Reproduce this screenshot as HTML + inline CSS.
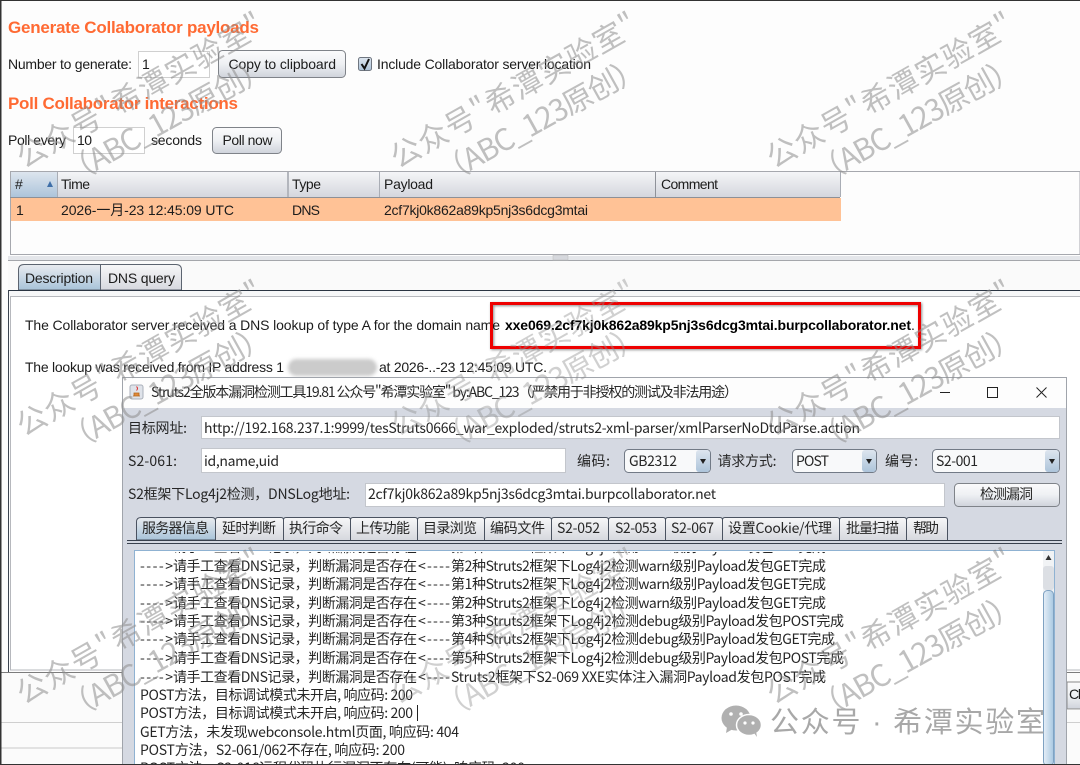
<!DOCTYPE html>
<html lang="zh">
<head>
<meta charset="utf-8">
<title>Burp Collaborator client</title>
<style>
html,body{margin:0;padding:0;background:#fdfdfd;width:1080px;height:765px;overflow:hidden}
svg{display:block;filter:blur(.3px)}
text{font-family:"Liberation Sans","Noto Sans CJK SC",sans-serif;font-size:14px;fill:#1c1c1c;white-space:pre}
.h{font-size:17px;font-weight:bold;fill:#ff6a33}
.w{font-family:"Noto Sans CJK SC","Liberation Sans",sans-serif;font-size:30px;fill:#8f8f8f;fill-opacity:.56}
.m{font-family:"Noto Sans CJK SC","Liberation Sans",sans-serif;font-size:14px;fill:#262626}
</style>
</head>
<body>
<svg xmlns="http://www.w3.org/2000/svg" width="1080" height="765" viewBox="0 0 1080 765">
<defs>
<linearGradient id="btn" x1="0" y1="0" x2="0" y2="1"><stop offset="0" stop-color="#fbfbfc"/><stop offset=".5" stop-color="#eef0f3"/><stop offset="1" stop-color="#cfd3db"/></linearGradient>
<linearGradient id="hd" x1="0" y1="0" x2="0" y2="1"><stop offset="0" stop-color="#f4f5f7"/><stop offset="1" stop-color="#d4d6dd"/></linearGradient>
<linearGradient id="hds" x1="0" y1="0" x2="0" y2="1"><stop offset="0" stop-color="#dde5ee"/><stop offset="1" stop-color="#adc4da"/></linearGradient>
<linearGradient id="tab" x1="0" y1="0" x2="0" y2="1"><stop offset="0" stop-color="#f7f7f8"/><stop offset="1" stop-color="#d6d8de"/></linearGradient>
<linearGradient id="tabs" x1="0" y1="0" x2="0" y2="1"><stop offset="0" stop-color="#e9ebef"/><stop offset="1" stop-color="#a8c3d9"/></linearGradient>
<linearGradient id="sb" x1="0" y1="0" x2="1" y2="0"><stop offset="0" stop-color="#e6eff7"/><stop offset="1" stop-color="#a9c8e2"/></linearGradient>
<filter id="bl" x="-20%" y="-40%" width="140%" height="180%"><feGaussianBlur stdDeviation="1.8"/></filter>
<filter id="sh" x="-5%" y="-20%" width="110%" height="140%"><feDropShadow dx="1" dy="1" stdDeviation="1.2" flood-color="#000" flood-opacity=".45"/></filter>
<clipPath id="logclip"><rect x="136" y="552" width="907" height="213"/></clipPath>
</defs>

<rect width="1080" height="765" fill="#fdfdfd"/>

<!-- Generate -->
<text class="h" x="8" y="33" textLength="251">Generate Collaborator payloads</text>
<text x="8" y="69" textLength="124">Number to generate:</text>
<rect x="138.500" y="51.500" width="71" height="26" fill="#fff" stroke="#d0d0d0"/>
<text x="142" y="69">1</text>
<rect x="218.500" y="50.500" width="127" height="27" rx="4" fill="url(#btn)" stroke="#7f8389"/>
<text x="228.500" y="69" textLength="107.500">Copy to clipboard</text>
<rect x="358.500" y="57.500" width="13" height="13" rx="2" fill="url(#hds)" stroke="#6f7680"/>
<path d="M361.500 64 L364.500 68.500 L369 59" fill="none" stroke="#111" stroke-width="2"/>
<text x="377" y="69" textLength="214">Include Collaborator server location</text>

<!-- Poll -->
<text class="h" x="8" y="109" textLength="230">Poll Collaborator interactions</text>
<text x="8" y="145" textLength="58">Poll every</text>
<rect x="73.500" y="127.500" width="71" height="26" fill="#fff" stroke="#d0d0d0"/>
<text x="77" y="145" textLength="15">10</text>
<text x="151" y="145" textLength="51">seconds</text>
<rect x="212.500" y="127.500" width="69" height="26" rx="4" fill="url(#btn)" stroke="#7f8389"/>
<text x="222.500" y="145" textLength="50">Poll now</text>

<!-- Table -->
<rect x="10.500" y="171.500" width="1069.500" height="83" fill="#fdfdfd" stroke="#a6a8ae"/>
<rect x="11" y="172" width="47" height="25" fill="url(#hds)"/>
<rect x="58" y="172" width="782" height="25" fill="url(#hd)"/>
<rect x="10" y="197" width="830" height="1" fill="#8d9097"/>
<rect x="57" y="172" width="1" height="25" fill="#a9adb5"/>
<rect x="287" y="172" width="2" height="25" fill="#b3b6bd"/>
<rect x="379" y="172" width="1" height="25" fill="#a9adb5"/>
<rect x="655" y="172" width="1" height="25" fill="#8f9299"/>
<rect x="840" y="172" width="1" height="25" fill="#a9adb5"/>
<path d="M47 187 L50 181 L53 187 Z" fill="#3f6fa8"/>
<text x="15" y="189">#</text>
<text x="61" y="189" textLength="29">Time</text>
<text x="292" y="189" textLength="29">Type</text>
<text x="384" y="189" textLength="49">Payload</text>
<text x="661" y="189" textLength="57">Comment</text>
<rect x="11" y="198" width="830" height="23" fill="#ffc296"/>
<text x="16" y="215">1</text>
<text x="61" y="215" textLength="173">2026-一月-23 12:45:09 UTC</text>
<text x="292" y="215" textLength="28">DNS</text>
<text x="384" y="215" textLength="204">2cf7kj0k862a89kp5nj3s6dcg3mtai</text>
<rect x="8" y="256" width="1072" height="4" fill="#e4e6ea"/>
<rect x="8" y="260" width="1072" height="1" fill="#a4a6ab"/>
<rect x="553" y="255" width="15" height="5" fill="#d6d8dd" stroke="#bbb" stroke-width=".5"/>
<rect x="8" y="261" width="1072" height="29" fill="#fafafa"/>

<!-- Detail tabs -->
<path d="M18.500 290 V270 Q18.500 264.500 24 264.500 H100.500 V290 Z" fill="url(#tabs)" stroke="#5c6470"/>
<path d="M100.500 290 V264.500 H176 Q181.500 264.500 181.500 270 V290 Z" fill="url(#tab)" stroke="#5c6470"/>
<text x="25" y="283" textLength="68">Description</text>
<text x="108" y="283" textLength="67">DNS query</text>
<rect x="8" y="291" width="1072" height="5" fill="#f6f7f8"/>
<rect x="8" y="290" width="1072" height="1" fill="#2a3442"/>
<rect x="8" y="290" width="1" height="383" fill="#3c4450"/>
<rect x="8" y="672" width="1072" height="1" fill="#3c4450"/>
<rect x="10.500" y="296.500" width="1070" height="373.500" fill="#fff" stroke="#b6b8bd"/>

<!-- Description text -->
<text x="25" y="330" textLength="475">The Collaborator server received a DNS lookup of type A for the domain name</text>
<text x="505" y="330" textLength="406" style="font-weight:bold;fill:#000">xxe069.2cf7kj0k862a89kp5nj3s6dcg3mtai.burpcollaborator.net</text>
<text x="911" y="330">.</text>
<text x="25" y="372" textLength="259">The lookup was received from IP address 1</text>
<text x="379" y="372" textLength="168">at 2026-..-23 12:45:09 UTC.</text>
<rect x="288" y="359" width="89" height="17" rx="8.500" fill="#cbcbcb" filter="url(#bl)"/>
<rect x="491.500" y="303.500" width="428" height="44" fill="none" stroke="#ee0000" stroke-width="3" filter="url(#sh)"/>

<!-- Lower right / left chrome -->
<rect x="0" y="673" width="1080" height="92" fill="#fbfbfb"/>
<rect x="0" y="672" width="1080" height="1" fill="#7c7c7c"/>
<rect x="0" y="722" width="1080" height="1" fill="#cfcfcf"/>
<rect x="0" y="747" width="122" height="2" fill="#e2e2e2"/>
<rect x="1067" y="682" width="14" height="27" fill="url(#btn)" stroke="#8a8a8a"/>
<text x="1069" y="699" textLength="12">Cl</text>
<rect x="1067" y="709" width="13" height="1" fill="#cfcfcf"/>

<!-- Frame -->
<rect x="0" y="0" width="1080" height="1" fill="#333"/>
<rect x="0" y="0" width="1.500" height="765" fill="#333"/>
<rect x="0" y="764" width="1080" height="1" fill="#333"/>

<!-- App window -->
<rect x="122" y="377" width="945" height="387" fill="#d5d9e2"/>
<rect x="122.500" y="377.500" width="944" height="387" fill="none" stroke="#a0a4ab"/>
<rect x="123" y="378" width="943" height="30" fill="#fdfdfd"/>
<rect x="130" y="385" width="13" height="14" rx="2" fill="#dfe3ea" stroke="#aab0ba"/>
<path d="M133 396 h7 M134 393 h5 v3 h-5 z" stroke="#b5651d" fill="#e08a3a" stroke-width=".8"/>
<path d="M136.500 386.500 q2 2 0 4" fill="none" stroke="#d33" stroke-width="1"/>
<text class="m" x="151" y="397" textLength="587">Struts2全版本漏洞检测工具19.81 公众号"希潭实验室" by:ABC_123（严禁用于非授权的测试及非法用途）</text>
<rect x="940" y="392" width="10" height="1" fill="#222"/>
<rect x="987.500" y="387.500" width="10" height="10" fill="none" stroke="#222"/>
<path d="M1036.500 387.500 L1046.500 397.500 M1046.500 387.500 L1036.500 397.500" stroke="#222" fill="none"/>

<text class="m" x="128" y="433" textLength="59">目标网址:</text>
<rect x="201.500" y="416.500" width="858" height="22" fill="#fff" stroke="#c3c6cc"/>
<text class="m" x="204" y="433" textLength="656">http://192.168.237.1:9999/tesStruts0666_war_exploded/struts2-xml-parser/xmlParserNoDtdParse.action</text>

<text class="m" x="128" y="466" textLength="49">S2-061:</text>
<rect x="201.500" y="448.500" width="364" height="24" fill="#fff" stroke="#c3c6cc"/>
<text class="m" x="204" y="466" textLength="75">id,name,uid</text>

<text class="m" x="577" y="466" textLength="33">编码:</text>
<rect x="624.500" y="449.500" width="86" height="23" rx="4" fill="#f8f9fa" stroke="#727a86"/>
<rect x="696" y="450" width="14" height="22" rx="3" fill="url(#hds)"/>
<path d="M700 459 h6 l-3 5 z" fill="#222"/>
<text class="m" x="629" y="466" textLength="48">GB2312</text>

<text class="m" x="717.500" y="466" textLength="59">请求方式:</text>
<rect x="792.500" y="449.500" width="84" height="23" rx="4" fill="#f8f9fa" stroke="#727a86"/>
<rect x="862" y="450" width="14" height="22" rx="3" fill="url(#hds)"/>
<path d="M866 459 h6 l-3 5 z" fill="#222"/>
<text class="m" x="796" y="466" textLength="33">POST</text>

<text class="m" x="885" y="466" textLength="33">编号:</text>
<rect x="932.500" y="449.500" width="127" height="23" rx="4" fill="#f8f9fa" stroke="#727a86"/>
<rect x="1045" y="450" width="14" height="22" rx="3" fill="url(#hds)"/>
<path d="M1049 459 h6 l-3 5 z" fill="#222"/>
<text class="m" x="936" y="466" textLength="42">S2-001</text>

<text class="m" x="128" y="499" textLength="222">S2框架下Log4j2检测，DNSLog地址:</text>
<rect x="365.500" y="483.500" width="579" height="23" fill="#fff" stroke="#c3c6cc"/>
<text class="m" x="368" y="499" textLength="348">2cf7kj0k862a89kp5nj3s6dcg3mtai.burpcollaborator.net</text>
<rect x="954.500" y="483.500" width="105" height="23" rx="4" fill="url(#btn)" stroke="#7f8389"/>
<text class="m" x="980" y="499" textLength="53">检测漏洞</text>

<!-- App tabs -->
<rect x="127" y="543" width="935" height="1" fill="#39414d"/>
<path d="M215.500 540 V520 Q215.500 517.500 218 517.500 H281 Q283.500 517.500 283.500 520 V540 M283.500 540 V520 Q283.500 517.500 286 517.500 H348 Q350.500 517.500 350.500 520 V540 M350.500 540 V520 Q350.500 517.500 353 517.500 H415 Q417.500 517.500 417.500 520 V540 M417.500 540 V520 Q417.500 517.500 420 517.500 H482 Q484.500 517.500 484.500 520 V540 M484.500 540 V520 Q484.500 517.500 487 517.500 H549 Q551.500 517.500 551.500 520 V540 M551.500 540 V520 Q551.500 517.500 554 517.500 H606 Q608.500 517.500 608.500 520 V540 M608.500 540 V520 Q608.500 517.500 611 517.500 H663 Q665.500 517.500 665.500 520 V540 M665.500 540 V520 Q665.500 517.500 668 517.500 H720 Q722.500 517.500 722.500 520 V540 M722.500 540 V520 Q722.500 517.500 725 517.500 H837 Q839.500 517.500 839.500 520 V540 M839.500 540 V520 Q839.500 517.500 842 517.500 H904 Q906.500 517.500 906.500 520 V540 M906.500 540 V520 Q906.500 517.500 909 517.500 H945 Q947.500 517.500 947.500 520 V540" fill="url(#tab)" stroke="#4a5260"/>
<path d="M136.500 540 V522 Q136.500 517.500 141 517.500 H212 Q215.500 517.500 215.500 521 V540 Z" fill="url(#tabs)" stroke="#4a5260"/>
<rect x="127" y="540" width="935" height="1" fill="#39414d"/>
<text class="m" x="142" y="533" textLength="67">服务器信息</text>
<text class="m" x="222" y="533" textLength="54">延时判断</text>
<text class="m" x="289" y="533" textLength="54">执行命令</text>
<text class="m" x="356" y="533" textLength="54">上传功能</text>
<text class="m" x="423" y="533" textLength="54">目录浏览</text>
<text class="m" x="490" y="533" textLength="55">编码文件</text>
<text class="m" x="557" y="533" textLength="43">S2-052</text>
<text class="m" x="615" y="533" textLength="42">S2-053</text>
<text class="m" x="671" y="533" textLength="43">S2-067</text>
<text class="m" x="728" y="533" textLength="104">设置Cookie/代理</text>
<text class="m" x="846" y="533" textLength="53">批量扫描</text>
<text class="m" x="913" y="533" textLength="26">帮助</text>

<!-- Log area -->
<rect x="134.500" y="550.500" width="920" height="220" fill="#fff" stroke="#8fb2d2"/>
<g clip-path="url(#logclip)">
<text class="m" x="140" y="552" textLength="33">----&gt;</text><text class="m" x="173" y="552" textLength="244">请手工查看DNS记录，判断漏洞是否存在</text><text class="m" x="418" y="552" textLength="32">&lt;----</text><text class="m" x="451" y="552" textLength="375">第1种Struts2框架下Log4j2检测warn级别Payload发包GET完成</text>
<text class="m" x="140" y="571" textLength="33">----&gt;</text><text class="m" x="173" y="571" textLength="244">请手工查看DNS记录，判断漏洞是否存在</text><text class="m" x="418" y="571" textLength="32">&lt;----</text><text class="m" x="451" y="571" textLength="375">第2种Struts2框架下Log4j2检测warn级别Payload发包GET完成</text>
<text class="m" x="140" y="589" textLength="33">----&gt;</text><text class="m" x="173" y="589" textLength="244">请手工查看DNS记录，判断漏洞是否存在</text><text class="m" x="418" y="589" textLength="32">&lt;----</text><text class="m" x="451" y="589" textLength="375">第1种Struts2框架下Log4j2检测warn级别Payload发包GET完成</text>
<text class="m" x="140" y="608" textLength="33">----&gt;</text><text class="m" x="173" y="608" textLength="244">请手工查看DNS记录，判断漏洞是否存在</text><text class="m" x="418" y="608" textLength="32">&lt;----</text><text class="m" x="451" y="608" textLength="375">第2种Struts2框架下Log4j2检测warn级别Payload发包GET完成</text>
<text class="m" x="140" y="626" textLength="33">----&gt;</text><text class="m" x="173" y="626" textLength="244">请手工查看DNS记录，判断漏洞是否存在</text><text class="m" x="418" y="626" textLength="32">&lt;----</text><text class="m" x="451" y="626" textLength="393">第3种Struts2框架下Log4j2检测debug级别Payload发包POST完成</text>
<text class="m" x="140" y="644" textLength="33">----&gt;</text><text class="m" x="173" y="644" textLength="244">请手工查看DNS记录，判断漏洞是否存在</text><text class="m" x="418" y="644" textLength="32">&lt;----</text><text class="m" x="451" y="644" textLength="384">第4种Struts2框架下Log4j2检测debug级别Payload发包GET完成</text>
<text class="m" x="140" y="663" textLength="33">----&gt;</text><text class="m" x="173" y="663" textLength="244">请手工查看DNS记录，判断漏洞是否存在</text><text class="m" x="418" y="663" textLength="32">&lt;----</text><text class="m" x="451" y="663" textLength="393">第5种Struts2框架下Log4j2检测debug级别Payload发包POST完成</text>
<text class="m" x="140" y="682" textLength="33">----&gt;</text><text class="m" x="173" y="682" textLength="244">请手工查看DNS记录，判断漏洞是否存在</text><text class="m" x="418" y="682" textLength="32">&lt;----</text><text class="m" x="451" y="682" textLength="375">Struts2框架下S2-069 XXE实体注入漏洞Payload发包POST完成</text>
<text class="m" x="140" y="700" textLength="273">POST方法，目标调试模式未开启, 响应码: 200</text>
<text class="m" x="140" y="718" textLength="273">POST方法，目标调试模式未开启, 响应码: 200</text>
<text class="m" x="140" y="737" textLength="319">GET方法，未发现webconsole.html页面, 响应码: 404</text>
<text class="m" x="140" y="755" textLength="265">POST方法，S2-061/062不存在, 响应码: 200</text>
<text class="m" x="140" y="773" textLength="385">POST方法，S2-016远程代码执行漏洞不存在(可能), 响应码: 200</text>
</g>
<rect x="417" y="705" width="1" height="16" fill="#222"/>

<!-- Scrollbar -->
<rect x="1043" y="551" width="11" height="213" fill="#f1f3f5"/>
<path d="M1045.500 560 L1048.500 555 L1051.500 560 Z" fill="#333"/>
<rect x="1043" y="566" width="11" height="24" rx="3" fill="#dcdfe4"/>
<rect x="1043.500" y="590.500" width="10" height="175" rx="4" fill="url(#sb)" stroke="#7fa2c2"/>
<rect x="122" y="764" width="958" height="1" fill="#333"/>

<!-- Watermarks -->
<g id="wm">
<g transform="translate(24,169) rotate(-29.500)"><text class="w" textLength="278">公众号"希潭实验室"</text></g>
<g transform="translate(71,185) rotate(-29)"><text class="w" textLength="230">（ABC_123原创）</text></g>
<g transform="translate(398,169) rotate(-29.500)"><text class="w" textLength="278">公众号"希潭实验室"</text></g>
<g transform="translate(445,185) rotate(-29)"><text class="w" textLength="230">（ABC_123原创）</text></g>
<g transform="translate(774,169) rotate(-29.500)"><text class="w" textLength="278">公众号"希潭实验室"</text></g>
<g transform="translate(821,185) rotate(-29)"><text class="w" textLength="230">（ABC_123原创）</text></g>
<g transform="translate(24,437) rotate(-29.500)"><text class="w" textLength="278">公众号"希潭实验室"</text></g>
<g transform="translate(71,453) rotate(-29)"><text class="w" textLength="230">（ABC_123原创）</text></g>
<g transform="translate(398,437) rotate(-29.500)" opacity=".75"><text class="w" textLength="278">公众号"希潭实验室"</text></g>
<g transform="translate(445,453) rotate(-29)" opacity=".75"><text class="w" textLength="230">（ABC_123原创）</text></g>
<g transform="translate(774,437) rotate(-29.500)"><text class="w" textLength="278">公众号"希潭实验室"</text></g>
<g transform="translate(821,453) rotate(-29)"><text class="w" textLength="230">（ABC_123原创）</text></g>
<g transform="translate(24,705) rotate(-29.500)"><text class="w" textLength="278">公众号"希潭实验室"</text></g>
<g transform="translate(71,721) rotate(-29)"><text class="w" textLength="230">（ABC_123原创）</text></g>
<g transform="translate(398,705) rotate(-29.500)" opacity=".75"><text class="w" textLength="278">公众号"希潭实验室"</text></g>
<g transform="translate(445,721) rotate(-29)" opacity=".75"><text class="w" textLength="230">（ABC_123原创）</text></g>
<g transform="translate(774,705) rotate(-29.500)"><text class="w" textLength="278">公众号"希潭实验室"</text></g>
<g transform="translate(821,721) rotate(-29)"><text class="w" textLength="230">（ABC_123原创）</text></g>
</g>

<!-- WeChat mark -->
<ellipse cx="736" cy="718" rx="14.500" ry="12.500" fill="#b0b0b0"/>
<path d="M727 727 l-1 6 l7 -4 z" fill="#b0b0b0"/>
<ellipse cx="749" cy="725" rx="12.500" ry="10.500" fill="#b0b0b0" stroke="#fff" stroke-width="1.500"/>
<path d="M754 733 l3 4 l-1 -6 z" fill="#b0b0b0"/>
<circle cx="731" cy="714" r="1.800" fill="#fff"/><circle cx="741" cy="714" r="1.800" fill="#fff"/>
<circle cx="745" cy="723" r="1.600" fill="#fff"/><circle cx="753" cy="723" r="1.600" fill="#fff"/>
<text x="770" y="732" textLength="275" style="font-size:29px;fill:#a8a8a8">公众号 · 希潭实验室</text>
</svg>
</body>
</html>
